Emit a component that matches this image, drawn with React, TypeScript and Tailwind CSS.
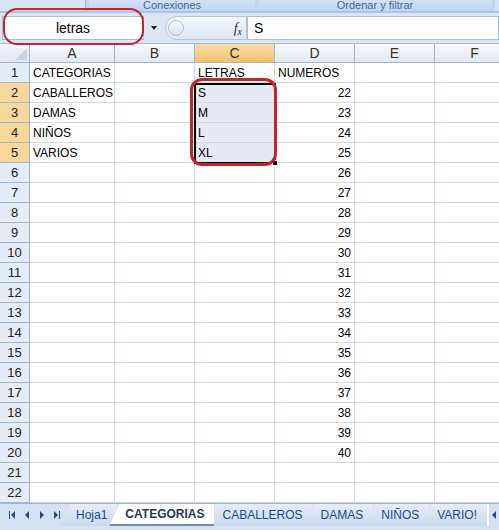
import React from 'react';

const COLS = ['A', 'B', 'C', 'D', 'E', 'F'];
const COL_W = 'grid-cols-[30px_85px_80px_80px_80px_80px_80px]';

const catA: Record<number, string> = {
  1: 'CATEGORIAS',
  2: 'CABALLEROS',
  3: 'DAMAS',
  4: 'NIÑOS',
  5: 'VARIOS',
};
const letC: Record<number, string> = { 1: 'LETRAS', 2: 'S', 3: 'M', 4: 'L', 5: 'XL' };

function Row({ n }: { n: number }) {
  const sel = n >= 2 && n <= 5;
  const num = n === 1 ? 'NUMEROS' : n <= 20 ? String(n + 20) : '';
  return (
    <>
      <div
        className={
          'h-5 flex items-center justify-center border-r border-b border-[#9eb6ce] text-[13px] text-[#222] ' +
          (sel ? 'bg-[#f8d79b]' : 'bg-[#e4ecf7]')
        }
      >
        {n}
      </div>
      <div className="h-5 flex items-center pl-[3px] border-r border-b border-[#d0d7e5]">{catA[n] ?? ''}</div>
      <div className="h-5 border-r border-b border-[#d0d7e5]" />
      <div
        className={
          'h-5 flex items-center pl-[3px] border-r border-b border-[#d0d7e5] ' + (sel ? 'bg-[#e6e9f4]' : '')
        }
      >
        {letC[n] ?? ''}
      </div>
      <div
        className={
          'h-5 flex items-center border-r border-b border-[#d0d7e5] ' +
          (n === 1 ? 'pl-[3px]' : 'justify-end pr-[3px]')
        }
      >
        {num}
      </div>
      <div className="h-5 border-r border-b border-[#d0d7e5]" />
      <div className="h-5 border-r border-b border-[#d0d7e5]" />
    </>
  );
}

function Tab({ label, active }: { label: string; active?: boolean }) {
  return (
    <div
      className={
        'relative h-[22px] flex items-center pl-[16px] pr-[10px] -ml-[8px] text-[12px] ' +
        (active
          ? 'z-10 bg-white font-bold text-[#1e3a5c] border-b-2 border-[#6f8fbf]'
          : 'bg-gradient-to-b from-[#e6eef9] to-[#c9d9ee] text-[#1e4b8c]')
      }
      style={{ clipPath: 'polygon(10px 0, 100% 0, 100% 100%, 0 100%)' }}
    >
      {label}
    </div>
  );
}

export default function App() {
  return (
    <div
      className="relative w-[499px] h-[530px] overflow-hidden bg-white text-[12px] text-black"
      style={{ fontFamily: '"Liberation Sans", Arial, sans-serif' }}
    >
      {/* ribbon group labels */}
      <div className="flex h-[11px] bg-[#c3d6ee] text-[11px] leading-[11px] text-[#3e6aa8]">
        <div className="w-[86px] border-r border-[#9db6d8] bg-[#d6e4f5]" />
        <div className="w-[166px] ml-[3px] bg-gradient-to-b from-[#d2e1f4] to-[#c0d5f0] text-center">
          Conexiones
        </div>
        <div className="w-[234px] ml-[3px] bg-gradient-to-b from-[#d2e1f4] to-[#c0d5f0] text-center">
          Ordenar y filtrar
        </div>
        <div className="flex-1 ml-[3px] bg-[#d2e1f4]" />
      </div>
      <div className="h-[2px] bg-[#aec4e0]" />

      {/* formula bar */}
      <div className="flex h-[31px] items-center bg-[#dbe6f4] border-b border-[#a9bfd6]">
        <div className="ml-[2px] w-[142px] h-[24px] bg-white border border-[#a9bfd6] flex items-center justify-center text-[14px]">
          letras
        </div>
        <svg width="20" height="10" viewBox="0 0 20 10" className="ml-[1px]">
          <path d="M6 3 L12 3 L9 7 Z" fill="#222" />
        </svg>
        <div className="w-[82px] h-[24px] rounded-l-full bg-gradient-to-b from-[#f4f7fb] to-[#dfe7f2] border border-[#b5c6dc] flex items-center justify-between">
          <div className="ml-[2px] w-[16px] h-[16px] rounded-full border border-[#b1bfd2] bg-gradient-to-b from-[#ffffff] to-[#d7dfea]" />
          <span
            className="mr-[4px] text-[14px] italic text-[#333]"
            style={{ fontFamily: '"Liberation Serif", "Times New Roman", serif' }}
          >
            f<sub className="text-[10px]">x</sub>
          </span>
        </div>
        <div className="flex-1 h-[24px] bg-white border border-[#a9bfd6] flex items-center pl-[6px] text-[14px]">
          S
        </div>
      </div>

      {/* sheet grid */}
      <div className={'grid ' + COL_W}>
        <div className="h-[19px] border-r border-b border-[#9eb6ce] bg-gradient-to-b from-[#f3f6fb] to-[#dfe7f2] relative">
          <svg width="12" height="12" viewBox="0 0 12 12" className="absolute right-[2px] bottom-[2px]">
            <path d="M12 0 L12 12 L0 12 Z" fill="#c8d4e4" />
          </svg>
        </div>
        {COLS.map((c) => (
          <div
            key={c}
            className={
              'h-[19px] flex items-center justify-center border-r border-b border-[#9eb6ce] text-[14px] ' +
              (c === 'C'
                ? 'bg-gradient-to-b from-[#f9dcaa] to-[#f2c16a] text-[#333]'
                : 'bg-gradient-to-b from-[#f7f9fc] to-[#e2e9f3] text-[#333]')
            }
          >
            {c}
          </div>
        ))}
        {Array.from({ length: 22 }, (_, i) => (
          <Row key={i} n={i + 1} />
        ))}
      </div>

      {/* selection border C2:C5 */}
      <div className="absolute left-[194px] top-[83px] w-[82px] h-[81px] border-2 border-black pointer-events-none" />
      <div className="absolute left-[272px] top-[160px] w-[6px] h-[6px] bg-black border border-white" />

      {/* red annotation rings */}
      <div className="absolute left-[3px] top-[8px] w-[141px] h-[37px] rounded-[14px] border-2 border-[#c4242b] pointer-events-none" />
      <div className="absolute left-[190px] top-[78px] w-[87px] h-[88px] rounded-[12px] border-[3px] border-[#c4242b] pointer-events-none" />

      {/* sheet tabs */}
      <div className="absolute left-0 right-0 bottom-0 h-[27px] bg-[#d4e1f3] border-t border-[#9db3d2] flex items-start">
        <div className="flex items-center h-[22px] w-[68px] pl-[8px] gap-[7px] text-[#2b4a78]">
          <svg width="8" height="8" viewBox="0 0 8 8">
            <path d="M1 0 H2 V8 H1 Z M7 0 V8 L3 4 Z" fill="#2b4a78" />
          </svg>
          <svg width="8" height="8" viewBox="0 0 8 8">
            <path d="M6 0 V8 L2 4 Z" fill="#2b4a78" />
          </svg>
          <svg width="8" height="8" viewBox="0 0 8 8">
            <path d="M2 0 V8 L6 4 Z" fill="#2b4a78" />
          </svg>
          <svg width="8" height="8" viewBox="0 0 8 8">
            <path d="M1 0 V8 L5 4 Z M6 0 H7 V8 H6 Z" fill="#2b4a78" />
          </svg>
        </div>
        <div className="flex items-start">
          <Tab label="Hoja1" />
          <Tab label="CATEGORIAS" active />
          <Tab label="CABALLEROS" />
          <Tab label="DAMAS" />
          <Tab label="NIÑOS" />
          <Tab label="VARIO!" />
        </div>
        <div className="absolute right-0 top-0 h-[22px] w-[12px] bg-[#d4e1f3] border-l-2 border-white flex items-center justify-center">
          <svg width="6" height="8" viewBox="0 0 6 8">
            <path d="M5 0 V8 L1 4 Z" fill="#2b4a78" />
          </svg>
        </div>
      </div>
    </div>
  );
}
